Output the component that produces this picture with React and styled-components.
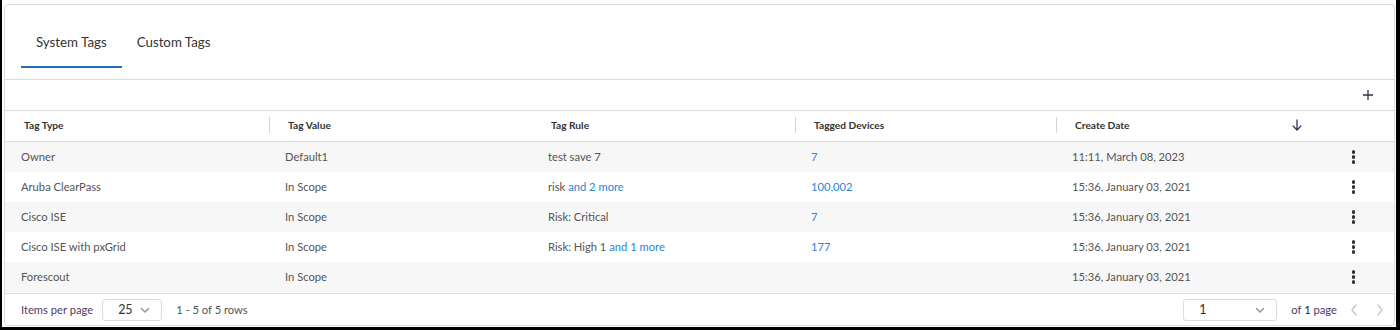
import React from "react";
import styled, { createGlobalStyle } from "styled-components";

const GlobalStyle = createGlobalStyle`
  html, body {
    margin: 0;
    padding: 0;
    background: #fff;
    font-family: Lato, "Open Sans", Arial, sans-serif;
  }
  * { box-sizing: border-box; }
`;

const rows = [
  { type: "Owner", value: "Default1", rule: "test save 7", more: "", devices: "7", date: "11:11, March 08, 2023" },
  { type: "Aruba ClearPass", value: "In Scope", rule: "risk", more: "and 2 more", devices: "100,002", date: "15:36, January 03, 2021" },
  { type: "Cisco ISE", value: "In Scope", rule: "Risk: Critical", more: "", devices: "7", date: "15:36, January 03, 2021" },
  { type: "Cisco ISE with pxGrid", value: "In Scope", rule: "Risk: High 1", more: "and 1 more", devices: "177", date: "15:36, January 03, 2021" },
  { type: "Forescout", value: "In Scope", rule: "", more: "", devices: "", date: "15:36, January 03, 2021" },
];

const columns = "264px 263px 263px 261px 1fr 83px";

const Frame = styled.div`
  width: 1400px;
  height: 330px;
  border-left: 2px solid #000;
  border-right: 4px solid #000;
  border-bottom: 3px solid #000;
  padding: 4px 1px 1px 2px;
`;

const Card = styled.div`
  height: 100%;
  border: 1px solid #dcdcdc;
  border-radius: 4px;
  display: flex;
  flex-direction: column;
  overflow: hidden;
`;

const TabsBar = styled.div`
  display: flex;
  padding: 11px 16px 11px 16px;
  border-bottom: 1px solid #dcdcdc;
`;

const Tab = styled.div`
  height: 52px;
  padding: 2px 15px 0;
  display: flex;
  align-items: center;
  font-size: 13.3px;
  color: #333;
  border-bottom: 2px solid ${(p) => (p.active ? "#1f6fbf" : "transparent")};
`;

const Toolbar = styled.div`
  height: 31px;
  display: flex;
  align-items: center;
  justify-content: flex-end;
  padding-right: 20px;
  border-bottom: 1px solid #dcdcdc;
`;

const IconButton = styled.span`
  display: inline-flex;
  width: 12px;
  height: 12px;
  color: #3b2a4d;
`;

const Row = styled.div`
  display: grid;
  grid-template-columns: ${columns};
  height: ${(p) => (p.head ? "31px" : "30px")};
  align-items: center;
  background: ${(p) => (p.shade ? "#f7f7f7" : "#fff")};
  border-bottom: ${(p) => (p.head ? "1px solid #dcdcdc" : "none")};
`;

const HeadCell = styled.div`
  height: 16px;
  display: flex;
  align-items: center;
  padding-left: ${(p) => (p.divider ? "18px" : "19px")};
  padding-right: 8px;
  margin-top: -2px;
  border-left: ${(p) => (p.divider ? "1px solid #d4d4d4" : "none")};
  font-size: 10.2px;
  font-weight: 700;
  color: #333;
`;

const DateHead = styled(HeadCell)`
  justify-content: space-between;
  padding-right: 8px;
`;

const Cell = styled.div`
  padding-left: 16px;
  padding-bottom: 2px;
  font-size: 11.2px;
  color: #555;
  white-space: nowrap;
`;

const LinkText = styled.span`
  color: #2a86d4;
`;

const KebabCell = styled.div`
  display: flex;
  justify-content: center;
  padding-left: 2px;
`;

const Kebab = styled.span`
  display: flex;
  flex-direction: column;
  gap: 1.5px;
  span {
    width: 3.6px;
    height: 3.6px;
    border-radius: 50%;
    background: #333;
  }
`;

const Body = styled.div`
  flex: 1;
  border-bottom: 1px solid #dcdcdc;
`;

const Footer = styled.div`
  height: 31px;
  display: flex;
  align-items: center;
  padding: 0 8px 0 16px;
  font-size: 11.2px;
  color: #555;
`;

const Muted = styled.span`
  color: #4f3a66;
`;

const Select = styled.div`
  width: ${(p) => p.w}px;
  height: 22px;
  border: 1px solid #dcdcdc;
  border-radius: 3px;
  display: flex;
  align-items: center;
  justify-content: space-between;
  padding: 0 10px 0 15px;
  margin: 0 ${(p) => p.mr}px 0 ${(p) => p.ml}px;
  font-size: 12.5px;
  color: #333;
`;

const Spacer = styled.div`
  flex: 1;
`;

const Pager = styled.span`
  display: inline-flex;
  align-items: center;
  gap: 14px;
  margin-left: 11px;
`;

const Chevron = ({ dir = "down", color = "#999" }) => {
  const d = dir === "down" ? "M2.5 4.5L6 8l3.5-3.5" : dir === "left" ? "M8 2L4 7l4 5" : "M4 2l4 5-4 5";
  const h = dir === "down" ? 12 : 14;
  return (
    <svg width="12" height={h} viewBox={`0 0 12 ${h}`} fill="none">
      <path d={d} stroke={color} strokeWidth="1.6" strokeLinecap="round" strokeLinejoin="round" />
    </svg>
  );
};

export default function App() {
  return (
    <Frame>
      <GlobalStyle />
      <Card>
        <TabsBar>
          <Tab active>System Tags</Tab>
          <Tab>Custom Tags</Tab>
        </TabsBar>
        <Toolbar>
          <IconButton>
            <svg width="12" height="12" viewBox="0 0 12 12">
              <path d="M6 1v10M1 6h10" stroke="currentColor" strokeWidth="1.3" />
            </svg>
          </IconButton>
        </Toolbar>
        <Row head>
          <HeadCell>Tag Type</HeadCell>
          <HeadCell divider>Tag Value</HeadCell>
          <HeadCell>Tag Rule</HeadCell>
          <HeadCell divider>Tagged Devices</HeadCell>
          <DateHead divider>
            Create Date
            <svg width="12" height="14" viewBox="0 0 12 14" fill="none">
              <path d="M6 1.5v10.5M1.8 7.8L6 12l4.2-4.2" stroke="#2b3a55" strokeWidth="1.3" />
            </svg>
          </DateHead>
          <div />
        </Row>
        <Body>
          {rows.map((r, i) => (
            <Row key={r.type} shade={i % 2 === 0}>
              <Cell>{r.type}</Cell>
              <Cell>{r.value}</Cell>
              <Cell>
                {r.rule}
                {r.more && <LinkText> {r.more}</LinkText>}
              </Cell>
              <Cell>
                <LinkText>{r.devices}</LinkText>
              </Cell>
              <Cell>{r.date}</Cell>
              <KebabCell>
                <Kebab>
                  <span />
                  <span />
                  <span />
                </Kebab>
              </KebabCell>
            </Row>
          ))}
        </Body>
        <Footer>
          <Muted>Items per page</Muted>
          <Select w={60} ml={9} mr={14}>
            25 <Chevron />
          </Select>
          1 - 5 of 5 rows
          <Spacer />
          <Select w={94} ml={0} mr={14}>
            1 <Chevron />
          </Select>
          <Muted>
            of <span style={{ color: "#222" }}>1</span> page
          </Muted>
          <Pager>
            <Chevron dir="left" color="#ccc" />
            <Chevron dir="right" color="#ccc" />
          </Pager>
        </Footer>
      </Card>
    </Frame>
  );
}
